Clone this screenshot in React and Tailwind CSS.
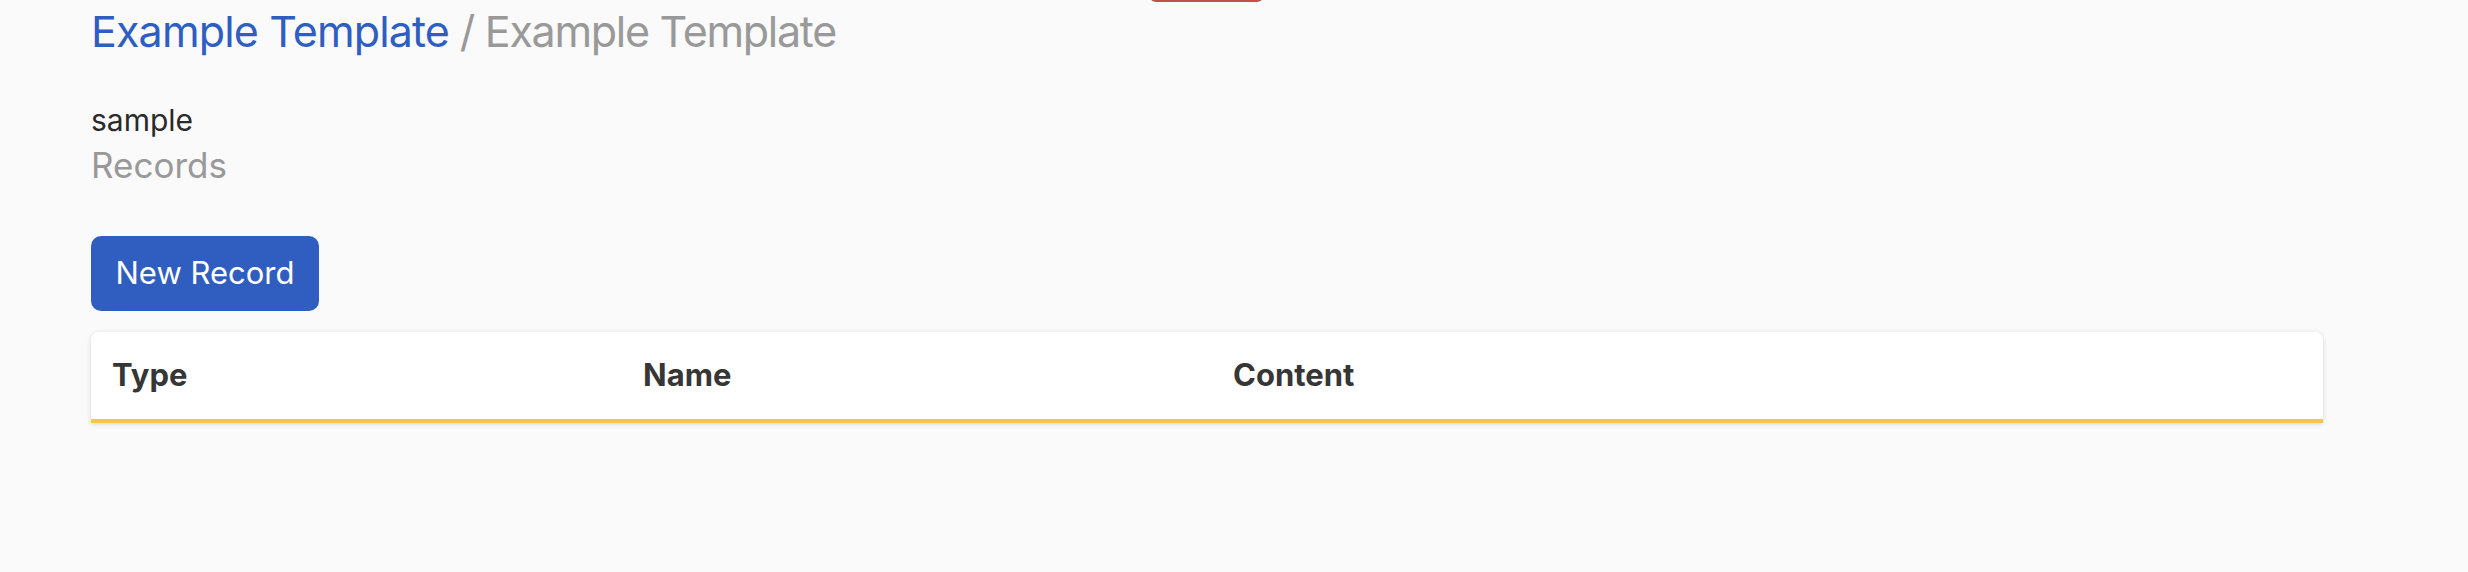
import React from "react";

export default function App() {
  return (
    <div
      className="relative min-h-[572px] w-full bg-[#fafafa] pl-[91px] pr-[145px]"
      style={{ fontFamily: "Inter, 'Noto Sans', sans-serif" }}
    >
      <div className="absolute left-[1150px] top-[-10px] h-[12px] w-[113px] rounded-[6px] bg-[#c0524a]" />

      <h1 className="pt-[5px] text-[43px] leading-[52px] font-normal">
        <span className="tracking-[-0.02em] text-[#2f5ec2]">Example Template</span>
        <span className="tracking-[-0.03em] text-[#999999]"> / Example Template</span>
      </h1>

      <div className="mt-[45px] text-[30px] leading-[36px] text-[#2a2a2a]">sample</div>
      <div className="mt-[7px] text-[35px] leading-[40px] text-[#999999]">Records</div>

      <button className="mt-[51px] flex h-[75px] w-[228px] items-center justify-center rounded-[10px] bg-[#305ec0] text-[31px] text-white">
        New Record
      </button>

      <div className="mt-[21px] w-[2232px] overflow-hidden rounded-t-[8px] border-b-[4px] border-[#f0c94a] bg-white shadow-[0_1px_5px_rgba(0,0,0,0.15)]">
        <div className="grid h-[87px] grid-cols-[531px_590px_1fr] items-center text-[31px] font-bold text-[#363636]">
          <div className="pl-[21px]">Type</div>
          <div className="pl-[21px]">Name</div>
          <div className="pl-[21px]">Content</div>
        </div>
      </div>
    </div>
  );
}
